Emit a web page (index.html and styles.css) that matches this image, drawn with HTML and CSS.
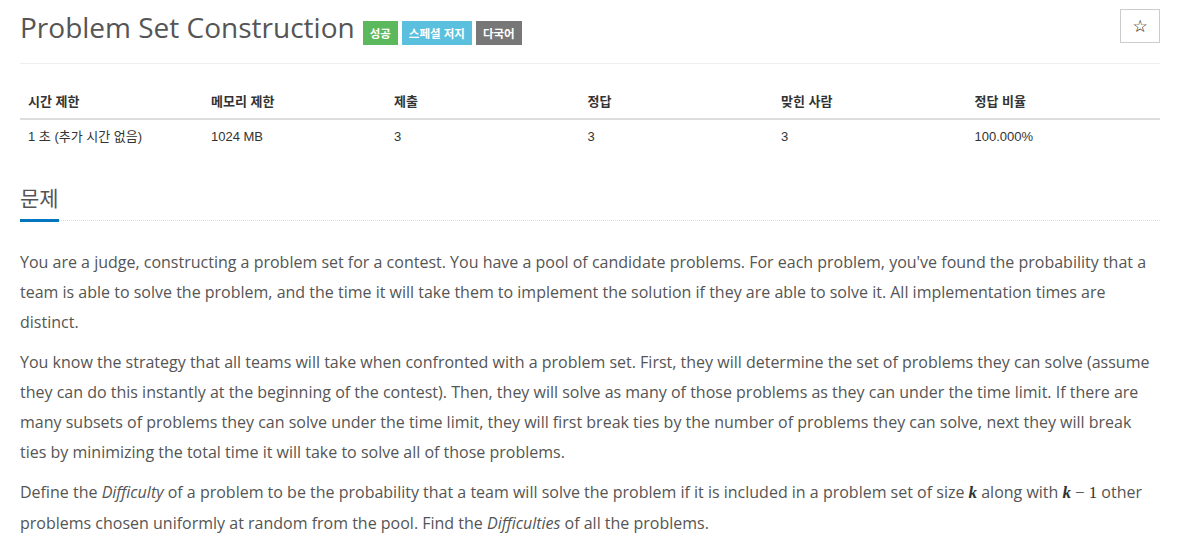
FILE: index.html
```html
<!DOCTYPE html>
<html lang="ko">
<head>
<meta charset="utf-8">
<title>Problem Set Construction</title>
<link rel="stylesheet" href="styles.css">
</head>
<body>
<div class="container">
  <div class="title-row">
    <h1 class="title">
      <span class="title-text">Problem Set Construction</span>
      <span class="labels">
        <span class="label label-success">성공</span>
        <span class="label label-info">스페셜 저지</span>
        <span class="label label-default">다국어</span>
      </span>
    </h1>
    <button class="star-btn" type="button">☆</button>
  </div>
  <hr class="divider">
  <table class="info-table">
    <thead>
      <tr>
        <th class="c-narrow">시간 제한</th>
        <th class="c-narrow">메모리 제한</th>
        <th class="c-wide">제출</th>
        <th class="c-wide">정답</th>
        <th class="c-wide">맞힌 사람</th>
        <th class="c-wide">정답 비율</th>
      </tr>
    </thead>
    <tbody>
      <tr>
        <td>1 초 (추가 시간 없음)</td>
        <td>1024 MB</td>
        <td>3</td>
        <td>3</td>
        <td>3</td>
        <td>100.000%</td>
      </tr>
    </tbody>
  </table>
  <section class="problem">
    <div class="headline">
      <h2>문제</h2>
    </div>
    <div class="problem-text">
      <p>You are a judge, constructing a problem set for a contest. You have a pool of candidate problems. For each problem, you've found the probability that a team is able to solve the problem, and the time it will take them to implement the solution if they are able to solve it. All implementation times are distinct.</p>
      <p>You know the strategy that all teams will take when confronted with a problem set. First, they will determine the set of problems they can solve (assume they can do this instantly at the beginning of the contest). Then, they will solve as many of those problems as they can under the time limit. If there are many subsets of problems they can solve under the time limit, they will first break ties by the number of problems they can solve, next they will break ties by minimizing the total time it will take to solve all of those problems.</p>
      <p>Define the <em>Difficulty</em> of a problem to be the probability that a team will solve the problem if it is included in a problem set of size <span class="math"><i>k</i></span> along with <span class="math"><i>k</i><span class="op">−</span>1</span> other problems chosen uniformly at random from the pool. Find the <em>Difficulties</em> of all the problems.</p>
    </div>
  </section>
</div>
</body>
</html>
```
FILE: styles.css
```css
html, body {
  margin: 0;
  padding: 0;
  background: #fff;
}
body {
  font-family: "Open Sans", "Noto Sans CJK KR", sans-serif;
  color: #555;
}
.container {
  width: 1140px;
  margin: 0 20px;
}
.title-row {
  display: flex;
  justify-content: space-between;
  align-items: flex-start;
  padding-top: 9px;
}
.title {
  margin: 0;
  display: flex;
  align-items: flex-start;
  font-weight: 400;
  font-size: 28px;
  line-height: 36px;
  color: #555;
}
.title-text {
  margin-right: 8px;
}
.labels {
  display: flex;
  gap: 4px;
  margin-top: 12px;
}
.label {
  display: inline-flex;
  align-items: center;
  height: 24px;
  padding: 0 7px;
  font-family: "Noto Sans CJK KR", "Liberation Sans", sans-serif;
  font-size: 11.5px;
  font-weight: 700;
  color: #fff;
}
.label-success { background: #5cb85c; }
.label-info { background: #5bc0de; }
.label-default { background: #777; }
.star-btn {
  width: 40px;
  height: 34px;
  border: 1px solid #ccc;
  background: #fff;
  font-size: 17px;
  line-height: 1;
  color: #111;
  padding: 0;
  font-family: "DejaVu Sans", sans-serif;
}
.divider {
  border: 0;
  border-top: 1px solid #eee;
  margin: 18px 0 21px;
}
.info-table {
  width: 100%;
  table-layout: fixed;
  border-collapse: collapse;
  font-family: "Liberation Sans", "Noto Sans CJK KR", sans-serif;
  font-size: 13px;
  color: #333;
}
.info-table th, .info-table td {
  text-align: left;
  padding: 8px;
  line-height: 18px;
}
.info-table th {
  padding-bottom: 7px;
}
.info-table th.c-narrow { width: 16%; }
.info-table th.c-wide { width: 17%; }
.info-table th {
  border-bottom: 2px solid #ddd;
  font-weight: 700;
}
.problem {
  margin-top: 29px;
}
.headline {
  border-bottom: 1px dotted #ddd;
}
.headline h2 {
  display: inline-block;
  margin: 0 0 -2px;
  font-size: 21px;
  font-weight: 400;
  line-height: 30px;
  padding-bottom: 6px;
  border-bottom: 3px solid #0076c0;
  color: #555;
}
.problem-text {
  margin-top: 26px;
  font-size: 16px;
  line-height: 30px;
}
.problem-text p {
  margin: 0 0 10px;
}
.problem-text em {
  font-style: italic;
}
.math {
  font-family: "Liberation Serif", serif;
  font-size: 17px;
  color: #333;
}
.math i {
  font-weight: 700;
}
.math .op {
  margin: 0 4px;
}
```
